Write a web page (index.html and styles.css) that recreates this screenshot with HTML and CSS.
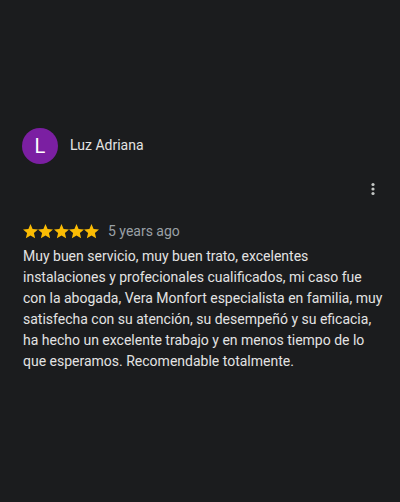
FILE: index.html
```html
<!DOCTYPE html>
<html lang="es">
<head>
<meta charset="utf-8">
<link rel="stylesheet" href="styles.css">
</head>
<body>
<div class="review">
  <div class="header">
    <div class="avatar">L</div>
    <div class="name">Luz Adriana</div>
  </div>
  <div class="menu-row">
    <svg class="menu" width="24" height="24" viewBox="0 0 24 24"><circle cx="12" cy="7.5" r="1.6" fill="#c4c7c5"/><circle cx="12" cy="12" r="1.6" fill="#c4c7c5"/><circle cx="12" cy="16.5" r="1.6" fill="#c4c7c5"/></svg>
  </div>
  <div class="rating">
    <div class="stars">
      <svg viewBox="2 2 20 20"><path d="M12 17.27L18.18 21l-1.64-7.03L22 9.24l-7.19-.61L12 2 9.19 8.63 2 9.24l5.46 4.73L5.82 21z"/></svg>
      <svg viewBox="2 2 20 20"><path d="M12 17.27L18.18 21l-1.64-7.03L22 9.24l-7.19-.61L12 2 9.19 8.63 2 9.24l5.46 4.73L5.82 21z"/></svg>
      <svg viewBox="2 2 20 20"><path d="M12 17.27L18.18 21l-1.64-7.03L22 9.24l-7.19-.61L12 2 9.19 8.63 2 9.24l5.46 4.73L5.82 21z"/></svg>
      <svg viewBox="2 2 20 20"><path d="M12 17.27L18.18 21l-1.64-7.03L22 9.24l-7.19-.61L12 2 9.19 8.63 2 9.24l5.46 4.73L5.82 21z"/></svg>
      <svg viewBox="2 2 20 20"><path d="M12 17.27L18.18 21l-1.64-7.03L22 9.24l-7.19-.61L12 2 9.19 8.63 2 9.24l5.46 4.73L5.82 21z"/></svg>
    </div>
    <span class="time">5 years ago</span>
  </div>
  <p class="text">Muy buen servicio, muy buen trato, excelentes instalaciones y profecionales cualificados, mi caso fue con la abogada, Vera Monfort especialista en familia, muy satisfecha con su atención, su desempeñó y su eficacia, ha hecho un excelente trabajo y en menos tiempo de lo que esperamos. Recomendable totalmente.</p>
</div>
</body>
</html>
```
FILE: styles.css
```css
html, body {
  margin: 0;
  padding: 0;
  background: #1b1c1e;
  height: 100%;
}
body {
  font-family: Roboto, "Liberation Sans", Arial, sans-serif;
  color: #e3e3e3;
}
.review {
  padding: 128px 14px 0 23px;
}
.header {
  display: flex;
  align-items: center;
  gap: 12px;
  margin-left: -1px;
}
.avatar {
  width: 36px;
  height: 36px;
  border-radius: 50%;
  background: #7b1fa2;
  color: #fff;
  font-size: 20px;
  display: flex;
  align-items: center;
  justify-content: center;
}
.name {
  font-size: 14px;
  color: #e3e3e3;
  margin-top: -2px;
}
.menu-row {
  display: flex;
  justify-content: flex-end;
  margin-top: 13px;
  height: 24px;
}
.menu {
  display: block;
  width: 24px;
  height: 24px;
  margin-right: 1px;
}
.rating {
  display: flex;
  align-items: center;
  margin-top: 22px;
  height: 16px;
}
.stars {
  display: flex;
  gap: 0.25px;
}
.stars svg {
  width: 15px;
  height: 15px;
  fill: #fbbc04;
  display: block;
}
.time {
  margin-left: 9px;
  font-size: 14px;
  color: #9aa0a6;
}
.text {
  margin: 7px 0 0 0;
  font-size: 14px;
  line-height: 21px;
  color: #e3e3e3;
}
```
